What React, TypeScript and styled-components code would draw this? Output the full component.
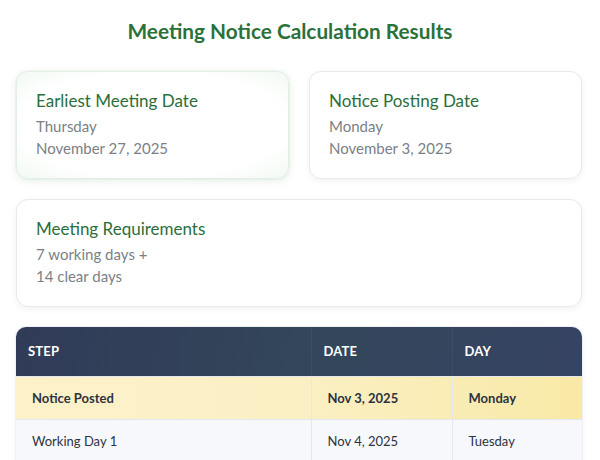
import React from "react";
import styled, { createGlobalStyle } from "styled-components";

const Global = createGlobalStyle`
  html, body { margin: 0; padding: 0; background: #ffffff; overflow: hidden; }
  body { font-family: "Lato", "Noto Sans", sans-serif; }
`;

const Page = styled.div`
  padding: 17px 18px 24px 16px;
  display: flex;
  flex-direction: column;
  gap: 20px;
`;

const Title = styled.h2`
  margin: 0 0 6px;
  padding-right: 18px;
  text-align: center;
  font-family: "Lato", sans-serif;
  font-weight: 700;
  font-size: 20.8px;
  line-height: 28px;
  color: #2b7139;
`;

const CardRow = styled.div`
  display: grid;
  grid-template-columns: 1fr 1fr;
  gap: 20px;
`;

const Card = styled.div<{ $active?: boolean }>`
  border-radius: 12px;
  padding: 18px 19px 19px;
  background: ${(p) =>
    p.$active
      ? "radial-gradient(ellipse at center, #ffffff 70%, #f2f9f3 100%)"
      : "#ffffff"};
  border: 1px solid ${(p) => (p.$active ? "#e3efe5" : "#e6e9ee")};
  box-shadow: ${(p) =>
    p.$active
      ? "0 2px 8px rgba(46, 125, 50, 0.12), 0 0 0 1px rgba(46,125,50,0.04)"
      : "0 2px 6px rgba(30, 40, 60, 0.06)"};
`;

const CardTitle = styled.div`
  font-family: "Lato", sans-serif;
  font-size: 17px;
  line-height: 22px;
  color: #2b6e3b;
  margin-bottom: 3px;
`;

const CardLine = styled.div`
  font-family: "Lato", sans-serif;
  font-size: 15px;
  line-height: 22px;
  color: #7b7f86;
`;

const TableWrap = styled.div`
  border-radius: 10px;
  overflow: hidden;
  box-shadow: 0 0 0 1px #eef0f4, 0 2px 6px rgba(30, 40, 60, 0.06);
`;

const Table = styled.table`
  width: 100%;
  table-layout: fixed;
  border-collapse: collapse;
  font-family: "Lato", sans-serif;
`;

const HeadRow = styled.tr`
  background: linear-gradient(100deg, #303b58 0%, #33465a 50%, #364463 100%);
`;

const Th = styled.th<{ $w?: string }>`
  box-sizing: border-box;
  width: ${(p) => p.$w || "auto"};
  height: 49px;
  padding: 0 12px;
  text-align: left;
  color: #ffffff;
  font-size: 13px;
  font-weight: 700;
  letter-spacing: 0.2px;
  border-left: 1px solid rgba(255, 255, 255, 0.04);
  &:first-child { border-left: none; }
`;

const Tr = styled.tr<{ $highlight?: boolean }>`
  background: ${(p) =>
    p.$highlight
      ? "linear-gradient(90deg, #fcf1c9 0%, #fbf0c4 50%, #f8e9a6 100%)"
      : "#f7f8fc"};
  font-weight: ${(p) => (p.$highlight ? 700 : 400)};
`;

const Td = styled.td`
  height: 42px;
  padding: 0 16px;
  font-size: 13px;
  color: #2d3340;
  border-top: 1px solid #e4e7ee;
  border-left: 1px solid #e4e7ee;
  white-space: nowrap;
  &:first-child { border-left: none; }
`;

const rows = [
  { step: "Notice Posted", date: "Nov 3, 2025", day: "Monday", hl: true },
  { step: "Working Day 1", date: "Nov 4, 2025", day: "Tuesday" },
  { step: "Working Day 2", date: "Nov 5, 2025", day: "Wednesday" },
  { step: "Working Day 3", date: "Nov 6, 2025", day: "Thursday" },
];

export default function App() {
  return (
    <>
      <Global />
      <Page>
        <Title>Meeting Notice Calculation Results</Title>
        <CardRow>
          <Card $active>
            <CardTitle>Earliest Meeting Date</CardTitle>
            <CardLine>Thursday</CardLine>
            <CardLine>November 27, 2025</CardLine>
          </Card>
          <Card>
            <CardTitle>Notice Posting Date</CardTitle>
            <CardLine>Monday</CardLine>
            <CardLine>November 3, 2025</CardLine>
          </Card>
        </CardRow>
        <Card>
          <CardTitle>Meeting Requirements</CardTitle>
          <CardLine>7 working days +</CardLine>
          <CardLine>14 clear days</CardLine>
        </Card>
        <TableWrap>
          <Table>
            <thead>
              <HeadRow>
                <Th $w="295px">STEP</Th>
                <Th $w="141px">DATE</Th>
                <Th>DAY</Th>
              </HeadRow>
            </thead>
            <tbody>
              {rows.map((r) => (
                <Tr key={r.step} $highlight={r.hl}>
                  <Td>{r.step}</Td>
                  <Td>{r.date}</Td>
                  <Td>{r.day}</Td>
                </Tr>
              ))}
            </tbody>
          </Table>
        </TableWrap>
      </Page>
    </>
  );
}
